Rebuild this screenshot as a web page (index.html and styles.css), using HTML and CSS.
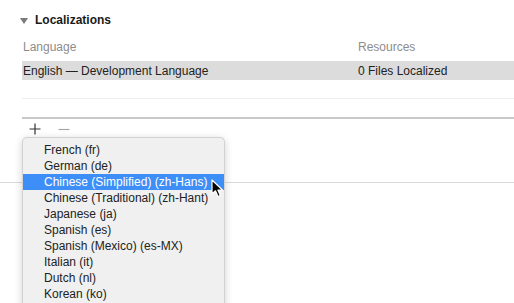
FILE: index.html
```html
<!DOCTYPE html>
<html lang="en">
<head>
  <meta charset="UTF-8">
  <title>Localizations</title>
  <link rel="stylesheet" href="styles.css">
</head>
<body>
  <div class="panel">
    <div class="section-title">
      <span class="disclosure"></span>
      <span>Localizations</span>
    </div>

    <div class="loc-table">
      <div class="row head">
        <div class="col-lang">Language</div>
        <div class="col-res">Resources</div>
      </div>
      <div class="row selected">
        <div class="col-lang">English — Development Language</div>
        <div class="col-res">0 Files Localized</div>
      </div>
      <div class="row empty"></div>
      <div class="row empty last"></div>
    </div>

    <div class="buttons">
      <svg class="btn" width="12" height="12" viewBox="0 0 12 12">
        <path d="M6 0.5 V11.5 M0.5 6 H11.5" stroke="#333" stroke-width="1.2"/>
      </svg>
      <svg class="btn" width="12" height="12" viewBox="0 0 12 12">
        <path d="M0.5 6.5 H11.5" stroke="#a8a8a8" stroke-width="1.2"/>
      </svg>
    </div>

    <hr class="separator">

    <!-- popup menu with languages -->
    <ul class="menu">
      <li>French (fr)</li>
      <li>German (de)</li>
      <li class="active">Chinese (Simplified) (zh-Hans)</li>
      <li>Chinese (Traditional) (zh-Hant)</li>
      <li>Japanese (ja)</li>
      <li>Spanish (es)</li>
      <li>Spanish (Mexico) (es-MX)</li>
      <li>Italian (it)</li>
      <li>Dutch (nl)</li>
      <li>Korean (ko)</li>
    </ul>

    <svg class="cursor" width="14" height="20" viewBox="0 0 14 20">
      <path d="M1 1 L1 15 L4.5 11.8 L7 17.5 L9.3 16.5 L6.9 11 L11.5 11 Z" fill="#000" stroke="#fff" stroke-width="1.2" stroke-linejoin="round"/>
    </svg>
  </div>
</body>
</html>
```

FILE: styles.css
```css
body {
  margin: 0;
  padding: 0;
  background: #fff;
  font-family: "Liberation Sans", Arial, sans-serif;
  font-size: 12px;
  color: #222;
  overflow: hidden;
}
.panel {
  position: relative;
  width: 514px;
  height: 303px;
  overflow: hidden;
}
.section-title {
  display: flex;
  align-items: center;
  height: 20px;
  margin-top: 10px;
  padding-left: 20px;
  font-weight: bold;
  font-size: 12px;
  color: #1a1a1a;
}
.disclosure {
  width: 0;
  height: 0;
  border-left: 4px solid transparent;
  border-right: 4px solid transparent;
  border-top: 6px solid #7a7a7a;
  margin-right: 7px;
  margin-top: 1px;
}
.loc-table {
  margin-left: 22px;
  margin-top: 7px;
}
.row {
  display: flex;
  align-items: center;
}
.row.head {
  height: 20px;
  padding-bottom: 4px;
  color: #8c8c8c;
}
.row.selected {
  height: 19px;
  background: #dcdcdc;
}
.row.empty {
  height: 18px;
  border-bottom: 1px solid #ececec;
}
.row.empty.last {
  border-bottom: 2px solid #c9c9c9;
}
.col-lang {
  width: 334px;
  padding-left: 1px;
}
.col-res {
  padding-left: 1px;
}
.buttons {
  display: flex;
  gap: 17px;
  margin-left: 29px;
  margin-top: 4px;
  height: 12px;
  align-items: center;
}
.separator {
  margin: 47px 0 0;
  border: none;
  border-top: 1px solid #dadada;
}
.menu {
  position: absolute;
  left: 22px;
  top: 137px;
  width: 203px;
  margin: 0;
  padding: 4px 0 0;
  list-style: none;
  background: #f0f0f0;
  border: 1px solid #d2d2d2;
  border-bottom: none;
  border-radius: 5px 5px 0 0;
  box-sizing: border-box;
  height: 180px;
  box-shadow: 0 2px 8px rgba(0,0,0,0.18);
  color: #222;
}
.menu li {
  height: 16px;
  line-height: 16px;
  padding-left: 21px;
}
.menu li.active {
  background: #3d8ef7;
  color: #fff;
}
.cursor {
  position: absolute;
  left: 211px;
  top: 179px;
}
```
